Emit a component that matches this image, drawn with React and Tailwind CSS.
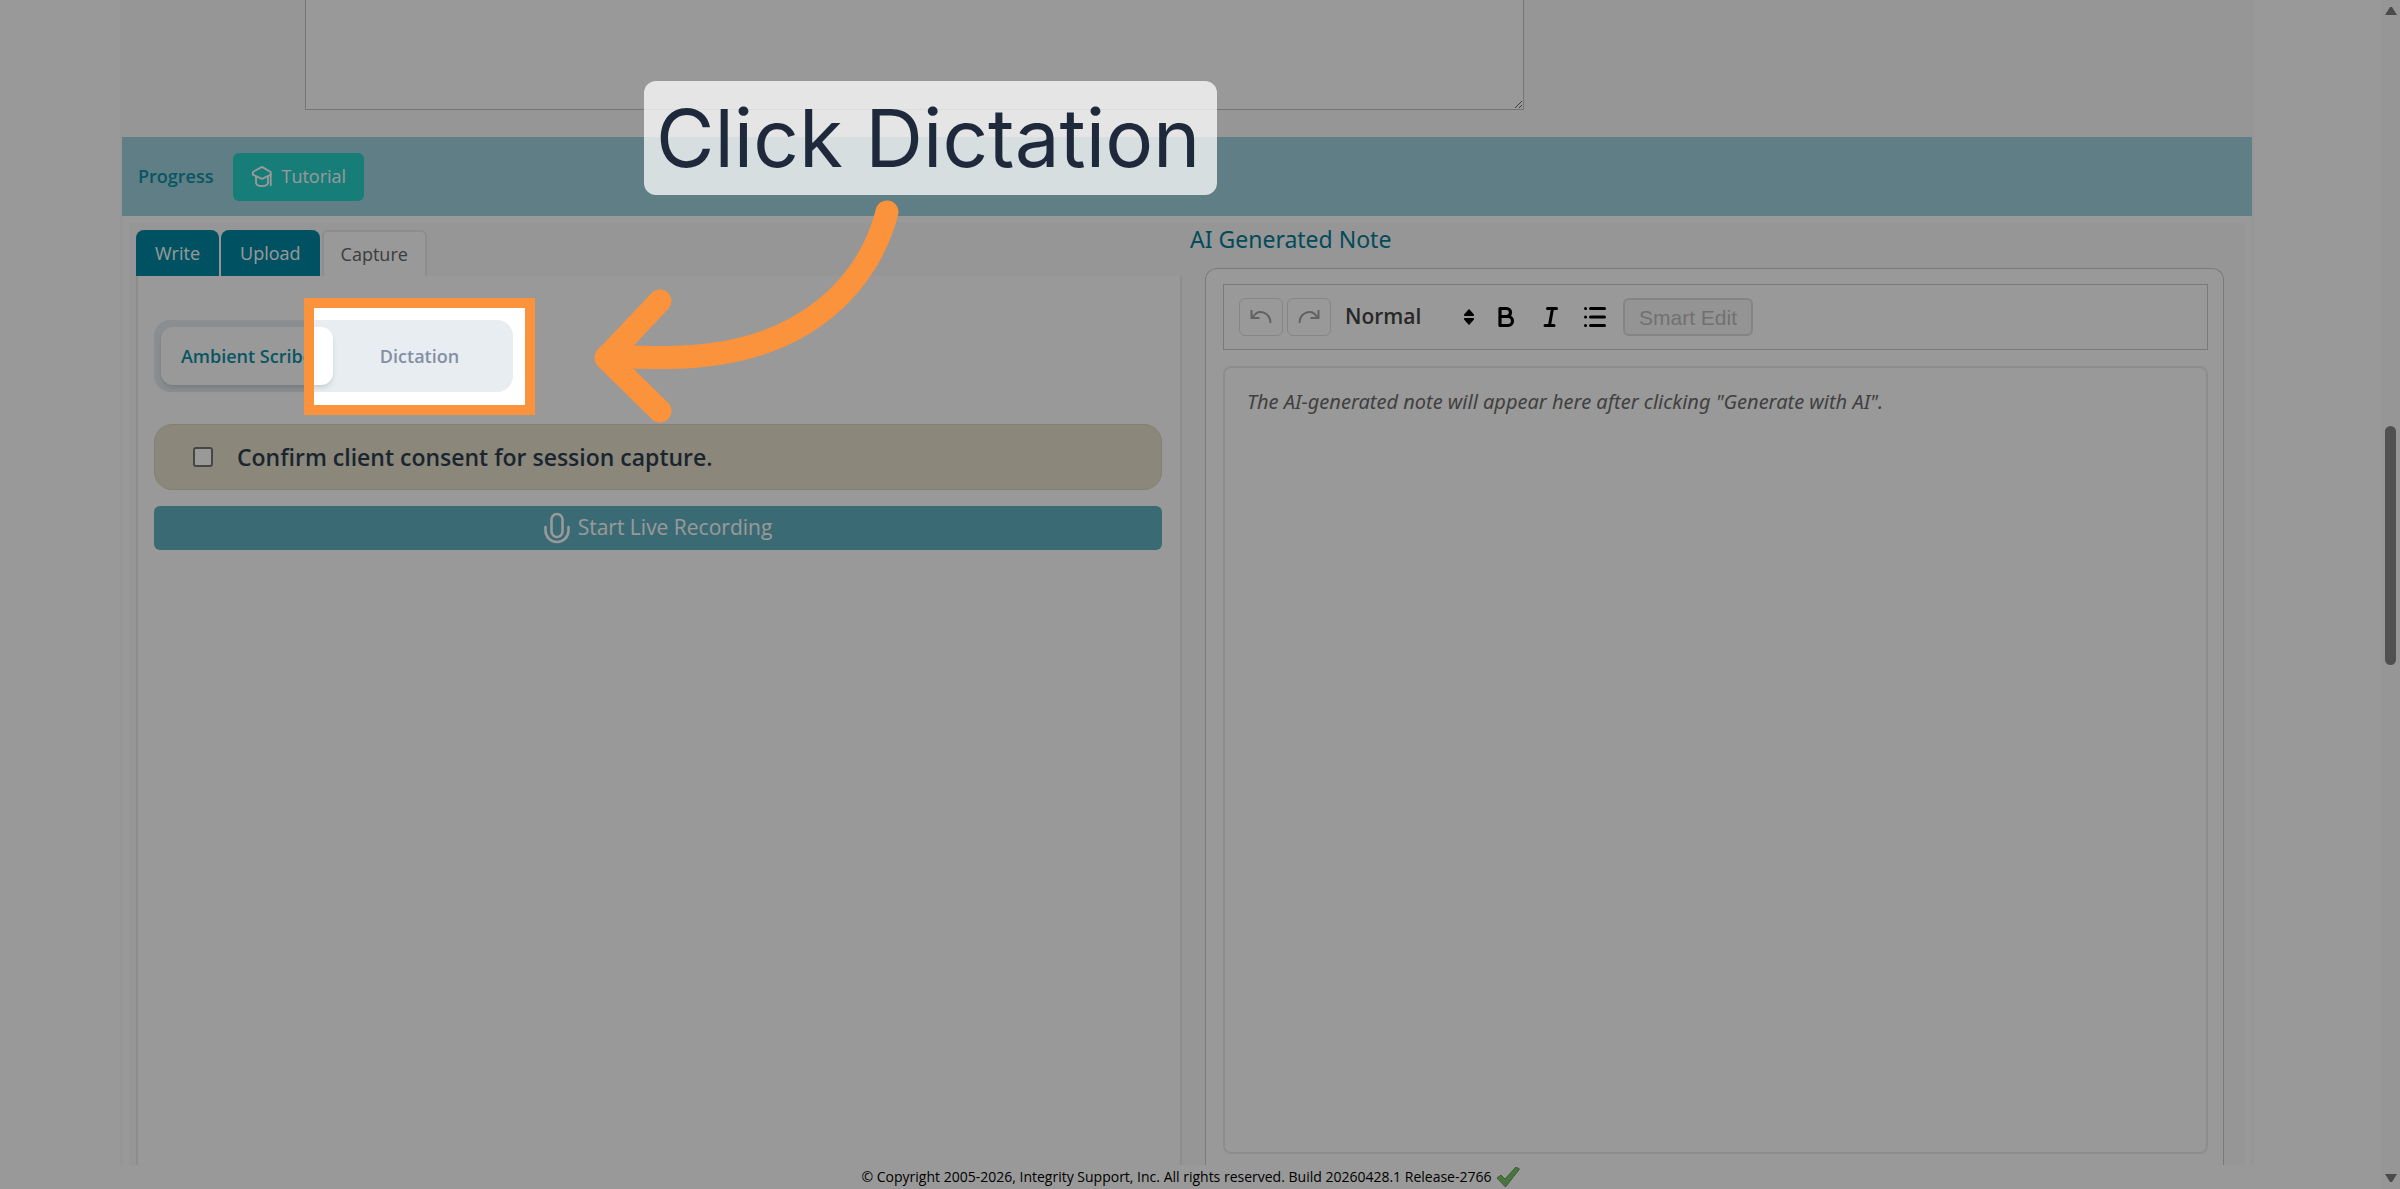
import { useState } from 'react'

const tabs = ['Write', 'Upload', 'Capture']

function CapIcon() {
  return (
    <svg className="w-[22px] h-[22px]" viewBox="0 0 24 24" fill="none" stroke="currentColor" strokeWidth="2" strokeLinejoin="round" strokeLinecap="round">
      <path d="M12 1 21.500 6.500v3L12 14 2 9.500v-3z" />
      <path d="M5.500 11.500v7.500c2 4 11 4 13 0v-7.500M21.500 9v12" />
    </svg>
  )
}

function MicIcon() {
  return (
    <svg className="w-[26px] h-[32px]" viewBox="0 0 26 32" fill="none" stroke="currentColor" strokeWidth="2.600" strokeLinecap="round">
      <rect x="7.500" y="2" width="11" height="23" rx="5.500" />
      <path d="M1.500 15v3.500a11.500 11.500 0 0 0 23 0V15" />
    </svg>
  )
}

function TurnIcon({ flip }) {
  return (
    <svg className="w-6 h-6" viewBox="0 0 24 24" fill="none" stroke="currentColor" strokeWidth="2">
      <path
        d={flip ? 'M2.500 18C3 7 15 3 20 12M21.500 5v8H13.500' : 'M21.500 18C21 7 9 3 4 12M2.500 5v8H10.500'}
      />
    </svg>
  )
}

function BoldIcon() {
  return (
    <svg className="w-7 h-7" viewBox="0 0 28 28" fill="none" stroke="currentColor" strokeWidth="3.200" strokeLinejoin="round">
      <path d="M7 5.500h6.500a4 4 0 0 1 0 8H7zM7 13.500h8a4.500 4.500 0 0 1 0 9H7z" />
    </svg>
  )
}

function ItalicIcon() {
  return (
    <svg className="w-7 h-7" viewBox="0 0 28 28" fill="none" stroke="currentColor" strokeWidth="3" strokeLinecap="round">
      <path d="M10.500 5.500h9M8 22.500h9M15.500 5.500 12.500 22.500" />
    </svg>
  )
}

function ListIcon() {
  return (
    <svg className="w-7 h-7" viewBox="0 0 28 28" fill="none" stroke="currentColor" strokeWidth="3" strokeLinecap="round">
      <path d="M9.500 5.500h14M9.500 14h14M9.500 22.500h14M4.500 5.500h.1M4.500 14h.1M4.500 22.500h.1" />
    </svg>
  )
}

function ProgressBar() {
  return (
    <header className="mx-0.5 flex h-[79px] items-center gap-5 bg-[#9ed2de] px-4">
      <h2 className="text-[18px] font-semibold text-[#0e8fa5]">Progress</h2>
      <button className="flex h-12 items-center gap-2 rounded-md bg-[#25d0ca] px-[18px] text-[18px] text-white cursor-pointer">
        <CapIcon />
        Tutorial
      </button>
    </header>
  )
}

// Dims the page around the target and points at it
function Callout() {
  return (
    <div className="pointer-events-none absolute -top-[22px] left-[150px] z-20 h-[117px] w-[231px] border-10 border-[#fb923c] shadow-[0_0_0_4000px_rgba(0,0,0,0.4)]">
      <svg className="absolute left-[280px] top-[-108px] h-[230px] w-[320px]" viewBox="0 0 320 230" fill="none" stroke="#fb923c" strokeWidth="23" strokeLinecap="round" strokeLinejoin="round">
        <path d="M293 12C276 78 216 157 73 157.500Q40 157.500 13 156" />
        <path d="M66 101 12 158l54 53" />
      </svg>
      <p className="absolute -top-[227px] left-[330px] flex h-[114px] w-[573px] items-center rounded-xl bg-white/75 px-3 font-['Inter'] text-[80px] leading-none font-normal whitespace-nowrap text-[#1e293b]">
        Click Dictation
      </p>
    </div>
  )
}

function CapturePanel() {
  const [mode, setMode] = useState('ambient')
  const [consent, setConsent] = useState(false)

  return (
    <section className="flex-1 border-x-2 border-[#ebebeb] bg-white pt-11 pr-[18px] pl-4">
      <div className="relative flex h-[72px] w-[359px] rounded-2xl bg-[#e8edf1] p-[7px] text-[18px] font-semibold">
        <button
          onClick={() => setMode('ambient')}
          className={
            mode === 'ambient'
              ? 'w-[172px] rounded-xl bg-white text-[#0e8fa5] shadow-md cursor-pointer'
              : 'w-[172px] rounded-xl text-[#838fa5] cursor-pointer'
          }
        >
          Ambient Scribe
        </button>
        <button
          onClick={() => setMode('dictation')}
          className={
            mode === 'dictation'
              ? 'flex-1 rounded-xl bg-white text-[#0e8fa5] shadow-md cursor-pointer'
              : 'flex-1 rounded-xl text-[#838fa5] cursor-pointer'
          }
        >
          Dictation
        </button>
        <Callout />
      </div>

      <label className="mt-8 flex h-[66px] items-center gap-6 rounded-[18px] border border-[#ddd6bd] bg-[#e9e1cd] pl-[38px] text-[23px] font-semibold text-[#2c3e50]">
        <input
          type="checkbox"
          checked={consent}
          onChange={(e) => setConsent(e.target.checked)}
          className="size-5 appearance-none rounded-[3px] border-2 border-[#767676] bg-white checked:bg-[#0089a5]"
        />
        Confirm client consent for session capture.
      </label>

      <button className="mt-4 flex h-11 w-full items-center justify-center gap-2 rounded-md bg-[#62b2c3] text-[21px] text-white cursor-pointer">
        <MicIcon />
        Start Live Recording
      </button>
    </section>
  )
}

function Toolbar() {
  return (
    <div className="flex h-[66px] items-center border border-[#c8cbce] px-[15px] text-black">
      <button aria-label="Undo" className="flex h-[38px] w-11 items-center justify-center rounded-md border border-[#e0e0e0] text-[#a3a3a3]">
        <TurnIcon />
      </button>
      <button aria-label="Redo" className="ml-1 flex h-[38px] w-11 items-center justify-center rounded-md border border-[#e0e0e0] text-[#a3a3a3]">
        <TurnIcon flip />
      </button>
      <div className="relative ml-[14px] flex w-[130px] items-center">
        <select aria-label="Text style" className="w-full appearance-none bg-transparent text-[21px] font-semibold text-[#444] outline-none">
          <option>Normal</option>
          <option>Heading 1</option>
          <option>Heading 2</option>
        </select>
        <svg className="pointer-events-none absolute right-0 h-5 w-3" viewBox="0 0 12 20" fill="currentColor" stroke="currentColor" strokeLinejoin="round">
          <path d="M6 2.500 10.500 7.500v1h-9v-1zM6 17.500 10.500 12.500v-1h-9v1z" />
        </svg>
      </div>
      <div className="ml-[18px] flex gap-4">
        <button aria-label="Bold"><BoldIcon /></button>
        <button aria-label="Italic"><ItalicIcon /></button>
        <button aria-label="Bulleted list"><ListIcon /></button>
      </div>
      <button className="ml-[14px] h-[38px] w-[130px] rounded-md border-2 border-[#dcdcdc] bg-[#f7f7f7] font-['Liberation_Sans'] text-[21px] leading-none text-[#bdbdbd]">
        Smart Edit
      </button>
    </div>
  )
}

function NotePanel() {
  return (
    <section className="flex flex-1 flex-col pr-[21px]">
      <h3 className="h-[45px] pl-2 font-['Noto_Sans'] text-[23px] leading-[32px] text-[#047d96]">
        AI Generated Note
      </h3>
      <div className="ml-[23px] flex flex-1 flex-col gap-4 rounded-t-xl border border-b-0 border-[#c6ced4] bg-white pt-[15px] pr-[15px] pb-[11px] pl-[17px]">
        <Toolbar />
        <div className="flex-1 rounded-lg border-2 border-[#ebebeb] px-[22px] pt-5 font-['Noto_Sans'] text-[20px] leading-7 italic text-[#6b6b6b]">
          The AI-generated note will appear here after clicking "Generate with AI".
        </div>
      </div>
    </section>
  )
}

function Scrollbar() {
  return (
    <div className="flex w-[19px] flex-col items-center justify-between bg-[#fafafa] py-[7px] text-[#7d7d7d]">
      <svg className="h-2 w-3" viewBox="0 0 12 8" fill="currentColor"><path d="M5 0h2l5 8H0z" /></svg>
      <div className="flex w-full flex-1 flex-col items-center pt-[411px]">
        <div className="h-[239px] w-[11px] rounded-full bg-[#858585]" />
      </div>
      <svg className="h-2 w-3" viewBox="0 0 12 8" fill="currentColor"><path d="M5 8h2l5-8H0z" /></svg>
    </div>
  )
}

function App() {
  const [active, setActive] = useState('Capture')

  return (
    <div className="relative flex h-screen overflow-hidden bg-white font-['Open_Sans',sans-serif]">
      <div className="flex min-w-0 flex-1 flex-col">
        <main className="mr-[127px] ml-[120px] flex flex-1 flex-col bg-[#fafafa]">
          <div className="flex h-[137px] pl-[185px]">
            <textarea
              aria-label="Notes"
              className="h-[110px] w-[1219px] border border-t-0 border-[#c4c4c4] bg-white outline-none"
            />
          </div>
          <ProgressBar />
          <div className="mx-0.5 flex flex-1 border-x border-[#fafafa] bg-white px-[6px] pt-[7px]">
            <div className="flex flex-1 bg-[#fafafa] pl-[7px]">
              <div className="flex w-[1046px] shrink flex-col">
                <nav className="mt-[7px] flex h-[46px] gap-0.5 text-[18px]">
                  {tabs.map((tab) => (
                    <button
                      key={tab}
                      onClick={() => setActive(tab)}
                      className={
                        tab === active
                          ? 'rounded-t-md border-2 border-b-0 border-[#ebebeb] bg-white px-[17px] text-[#666] cursor-pointer'
                          : 'rounded-t-lg bg-[#0089a5] px-[19px] text-white cursor-pointer'
                      }
                    >
                      {tab}
                    </button>
                  ))}
                </nav>
                <CapturePanel />
              </div>
              <NotePanel />
            </div>
          </div>
        </main>
        <footer className="flex h-6 items-center justify-center gap-1 bg-white text-[14px] leading-6 text-black">
          © Copyright 2005-2026, Integrity Support, Inc. All rights reserved. Build 20260428.1 Release-2766
          <svg className="h-5 w-6" viewBox="0 0 24 20">
            <path d="M1 11 5 8l4 4L20 0l3.500 2L9.500 20z" fill="#7cc46d" stroke="#5aa04f" />
          </svg>
        </footer>
      </div>
      <Scrollbar />
    </div>
  )
}

export default App
